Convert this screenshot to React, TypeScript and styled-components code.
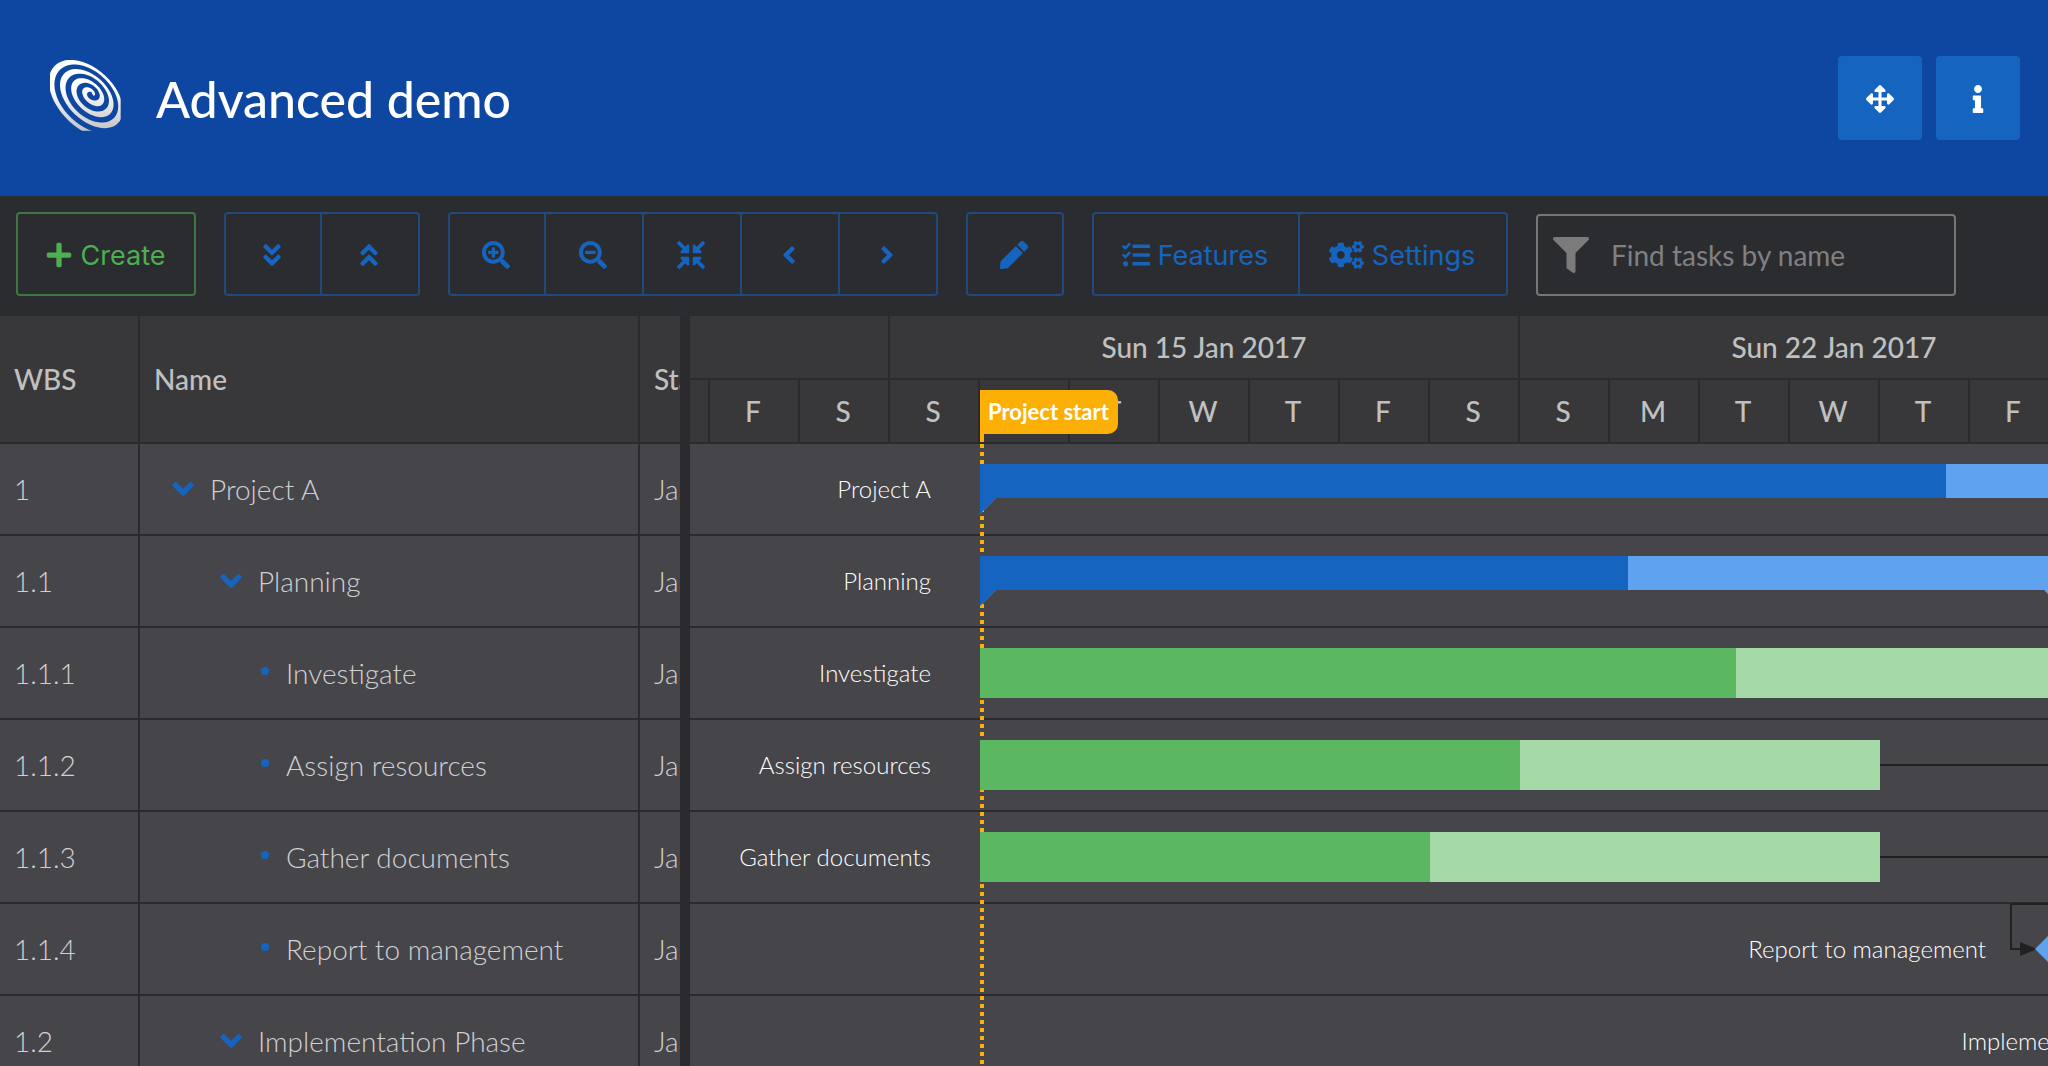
import React from "react";
import styled, { createGlobalStyle, css } from "styled-components";
import {
  FaAngleDoubleDown,
  FaAngleDoubleUp,
  FaAngleDown,
  FaAngleLeft,
  FaAngleRight,
  FaArrowsAlt,
  FaCogs,
  FaCompressArrowsAlt,
  FaFilter,
  FaInfo,
  FaPen,
  FaPlus,
  FaSearchMinus,
  FaSearchPlus,
  FaTasks,
} from "react-icons/fa";

const color = {
  header: "#0d47a1",
  primary: "#1565c0",
  primaryBorder: "#204a7c",
  green: "#4caf50",
  greenBorder: "#3e7742",
  toolbar: "#2b2c30",
  gridHeader: "#38383a",
  row: "#46454a",
  line: "#2b2a2e",
  headerText: "#c0c0c1",
  rowText: "#d0d0d2",
  parentLight: "#5fa2f0",
  task: "#5cb860",
  taskLight: "#a4d9a7",
  marker: "#fcb005",
  dependency: "#212122",
};

const DAY = 90;
const ROW = 92;
/* distance from the left edge of the timeline to the project start */
const ORIGIN = 290;

const GlobalStyle = createGlobalStyle`
  * { box-sizing: border-box; }
  body {
    margin: 0;
    background: ${color.row};
    font-family: Lato, "Liberation Sans", sans-serif;
  }
  button, input { font: inherit; margin: 0; }
`;

const Page = styled.div`
  display: flex;
  flex-direction: column;
  height: 100vh;
  overflow: hidden;
`;

const Header = styled.header`
  display: flex;
  align-items: center;
  flex: none;
  height: 196px;
  padding: 0 28px 0 50px;
  background: ${color.header};
`;

const Logo = styled.svg`
  display: block;
  width: 72px;
  height: 72px;
  margin-bottom: 4px;
`;

const Title = styled.h1`
  flex: 1;
  margin: 0 0 0 34px;
  padding-top: 2px;
  color: #fff;
  font-size: 50px;
  line-height: 60px;
  font-weight: 500;
`;

const HeaderTools = styled.div`
  display: flex;
  gap: 14px;
`;

const HeaderButton = styled.button`
  display: grid;
  place-items: center;
  width: 84px;
  height: 84px;
  padding: 2px 0 0;
  border: 0;
  border-radius: 4px;
  background: ${color.primary};
  color: #fff;
  font-size: 28px;
`;

const Toolbar = styled.div`
  display: flex;
  align-items: flex-end;
  flex: none;
  gap: 28px;
  padding: 16px 16px 20px;
  background: ${color.toolbar};
`;

const ButtonGroup = styled.div`
  display: flex;
`;

const ToolButton = styled.button<{ $width?: number; $tone?: "green" }>`
  display: flex;
  align-items: center;
  justify-content: center;
  gap: 8px;
  width: ${(p) => p.$width ?? 98}px;
  height: 84px;
  padding: 2px 2px 0 0;
  border: 2px solid ${(p) => (p.$tone ? color.greenBorder : color.primaryBorder)};
  background: transparent;
  color: ${(p) => (p.$tone ? color.green : color.primary)};
  font-family: Inter, "Liberation Sans", sans-serif;
  font-size: 27px;

  svg { flex: none; font-size: 28px; }
  &:not(:first-child) { border-left: 0; }
  &:first-child { border-top-left-radius: 4px; border-bottom-left-radius: 4px; }
  &:last-child { border-top-right-radius: 4px; border-bottom-right-radius: 4px; }
`;

/* the triple gear is drawn on a wider canvas than the other icons */
const SettingsIcon = styled(FaCogs)`
  width: 35px;
  height: 28px;
`;

const SearchField = styled.label`
  display: flex;
  align-items: center;
  width: 420px;
  height: 82px;
  padding: 0 15px;
  gap: 22px;
  border: 2px solid #777776;
  border-radius: 4px;
  color: #7b7b7b;

  svg { flex: none; font-size: 36px; }
`;

const SearchInput = styled.input`
  flex: 1;
  min-width: 0;
  padding: 0;
  border: 0;
  outline: 0;
  background: transparent;
  color: ${color.rowText};
  font-size: 28px;
  line-height: 34px;

  &::placeholder { color: #808082; opacity: 1; }
`;

const Gantt = styled.main`
  display: flex;
  flex: 1;
  min-height: 0;
  overflow: hidden;
`;

const GridPane = styled.section`
  flex: none;
  width: 680px;
  overflow: hidden;
  background: ${color.row};
`;

const Splitter = styled.div`
  flex: none;
  width: 10px;
  background: ${color.line};
`;

const Table = styled.table`
  width: 860px;
  table-layout: fixed;
  border-spacing: 0;
  font-size: 28px;
  line-height: 34px;
`;

const cell = css`
  padding: 0 14px;
  border-right: 2px solid ${color.line};
  border-bottom: 2px solid ${color.line};
  text-align: left;
  white-space: nowrap;
`;

const HeadCell = styled.th<{ $width: number }>`
  ${cell}
  width: ${(p) => p.$width}px;
  height: 128px;
  background: ${color.gridHeader};
  color: ${color.headerText};
  font-weight: 500;
`;

const Cell = styled.td`
  ${cell}
  height: ${ROW}px;
  color: ${color.rowText};
  font-weight: 300;
`;

const TreeCell = styled.div<{ $level: number }>`
  display: flex;
  align-items: center;
  padding-left: ${(p) => 12 + p.$level * 48}px;
`;

const Expander = styled.button`
  display: grid;
  place-items: center;
  width: 22px;
  height: 34px;
  margin-right: 22px;
  padding: 0;
  border: 0;
  background: transparent;
  color: ${color.primary};
  font-size: 34px;

  svg { flex: none; }
`;

const Bullet = styled.span`
  width: 8px;
  height: 8px;
  margin: 0 17px 4px -1px;
  border-radius: 50%;
  background: ${color.primary};
`;

const TimelinePane = styled.section`
  flex: 1;
  min-width: 0;
  position: relative;
  overflow: hidden;
  background: ${color.row};
`;

const TimeAxis = styled.div`
  display: flex;
  height: 128px;
  border-bottom: 2px solid ${color.line};
  background: ${color.gridHeader};
  color: ${color.headerText};
  font-size: 28px;
  line-height: 34px;
  font-weight: 500;
`;

const Week = styled.div<{ $width: number }>`
  flex: none;
  width: ${(p) => p.$width}px;
  overflow: hidden;
`;

const WeekTitle = styled.div`
  display: grid;
  place-items: center;
  height: 64px;
  border-right: 2px solid ${color.line};
  border-bottom: 2px solid ${color.line};
`;

const Days = styled.div`
  display: flex;
  justify-content: flex-end;
`;

const Day = styled.div`
  display: grid;
  place-items: center;
  flex: none;
  width: ${DAY}px;
  height: 62px;
  padding-right: 2px;
  border-right: 2px solid ${color.line};
`;

const TimelineRow = styled.div`
  position: relative;
  height: ${ROW}px;
  border-bottom: 2px solid ${color.line};
`;

const BarLabel = styled.span`
  position: absolute;
  right: 100%;
  top: 0;
  margin-right: 49px;
  color: #fff;
  font-size: 24px;
  line-height: 50px;
  font-weight: 300;
  white-space: nowrap;
`;

const Bar = styled.div`
  position: absolute;
  z-index: 2;
  top: 20px;
  height: 50px;
`;

const Fill = styled.div<{ $kind: "parent" | "task" }>`
  display: flex;
  height: 100%;
  background: ${(p) => (p.$kind === "parent" ? color.parentLight : color.taskLight)};
  ${(p) =>
    p.$kind === "parent" &&
    css`
      clip-path: polygon(0 0, 100% 0, 100% 100%, calc(100% - 16px) 34px, 16px 34px, 0 100%);
    `}
`;

const Progress = styled.div<{ $kind: "parent" | "task" }>`
  background: ${(p) => (p.$kind === "parent" ? color.primary : color.task)};
`;

const Milestone = styled.div`
  width: 100%;
  height: 100%;
  background: ${color.parentLight};
  clip-path: polygon(50% 0, 100% 50%, 50% 100%, 0 50%);
`;

const Marker = styled.div`
  position: absolute;
  left: ${ORIGIN}px;
  top: 74px;
  z-index: 1;
`;

const MarkerFlag = styled.div`
  padding: 0 9px 0 8px;
  border-radius: 0 10px 10px 0;
  background: ${color.marker};
  color: #fff;
  font-size: 22px;
  line-height: 44px;
  font-weight: 700;
  white-space: nowrap;
`;

const MarkerPole = styled.div`
  width: 4px;
  height: 8px;
  background: ${color.marker};
`;

const MarkerLine = styled.div`
  position: absolute;
  left: ${ORIGIN}px;
  top: 128px;
  bottom: 0;
  z-index: 1;
  width: 4px;
  background: repeating-linear-gradient(${color.marker} 0 4px, transparent 4px 8px);
`;

const Dependencies = styled.svg`
  position: absolute;
  left: 0;
  top: 128px;
  width: 100%;
  height: 100%;
  pointer-events: none;
`;

type Task = {
  wbs: string;
  name: string;
  level: number;
  kind: "parent" | "task" | "milestone";
  start: number;
  days: number;
  done: number;
};

const tasks: Task[] = [
  { wbs: "1", name: "Project A", level: 0, kind: "parent", start: 0, days: 23, done: 966 / (23 * DAY) },
  { wbs: "1.1", name: "Planning", level: 1, kind: "parent", start: 0, days: 12, done: 0.6 },
  { wbs: "1.1.1", name: "Investigate", level: 2, kind: "task", start: 0, days: 12, done: 0.7 },
  { wbs: "1.1.2", name: "Assign resources", level: 2, kind: "task", start: 0, days: 10, done: 0.6 },
  { wbs: "1.1.3", name: "Gather documents", level: 2, kind: "task", start: 0, days: 10, done: 0.5 },
  { wbs: "1.1.4", name: "Report to management", level: 2, kind: "milestone", start: 12, days: 0, done: 0 },
  { wbs: "1.2", name: "Implementation Phase", level: 1, kind: "parent", start: 14, days: 11, done: 0.2 },
];

const weeks = [
  { title: "", width: 200, days: ["T", "F", "S"] },
  ...["Sun 15 Jan 2017", "Sun 22 Jan 2017", "Sun 29 Jan 2017"].map((title) => ({
    title,
    width: 7 * DAY,
    days: ["S", "M", "T", "W", "T", "F", "S"],
  })),
];

/* A tilted spiral band; each turn drifts a little towards the lower left. */
function spiralPath() {
  const point = (level: number, turn: number) => {
    const a = 2 * Math.PI * turn;
    const across = level * (3.9 + 22.9 * Math.cos(a));
    const along = level * 36.7 * Math.sin(a);
    return `${(125 - 0.69 * across + 0.72 * along).toFixed(1)} ${(100 + 0.72 * across + 0.69 * along).toFixed(1)}`;
  };
  const outer: string[] = [];
  const inner: string[] = [];
  for (let t = 0.25; t <= 4.2; t += 0.02) {
    outer.push(point(t, t));
    inner.push(point(Math.max(t - 0.54 + 0.12 * Math.cos(2 * Math.PI * t) ** 2, 0), t));
  }
  return `M${outer.join("L")}L${inner.reverse().join("L")}Z`;
}

function SpiralLogo() {
  return (
    <Logo viewBox="0 0 216 216" aria-hidden="true">
      <defs>
        <linearGradient id="silver" x1="0" y1="0" x2="0" y2="1">
          <stop offset="0.35" stopColor="#fff" />
          <stop offset="0.9" stopColor="#c4c4c4" />
        </linearGradient>
        <clipPath id="frame">
          <rect x="0" y="0" width="212" height="212" />
        </clipPath>
      </defs>
      <path d={spiralPath()} fill="url(#silver)" clipPath="url(#frame)" />
    </Logo>
  );
}

function TaskBar({ task }: { task: Task }) {
  const milestone = task.kind === "milestone";
  const left = ORIGIN + task.start * DAY - (milestone ? 25 : 0);
  const width = milestone ? 50 : task.days * DAY;
  return (
    <Bar style={{ left, width }}>
      <BarLabel>{task.name}</BarLabel>
      {task.kind === "milestone" ? (
        <Milestone />
      ) : (
        <Fill $kind={task.kind}>
          <Progress $kind={task.kind} style={{ width: task.done * width }} />
        </Fill>
      )}
    </Bar>
  );
}

export default function App() {
  return (
    <Page>
      <GlobalStyle />
      <Header>
        <SpiralLogo />
        <Title>Advanced demo</Title>
        <HeaderTools>
          <HeaderButton aria-label="Full screen"><FaArrowsAlt /></HeaderButton>
          <HeaderButton aria-label="Information"><FaInfo /></HeaderButton>
        </HeaderTools>
      </Header>

      <Toolbar>
        <ButtonGroup>
          <ToolButton $width={180} $tone="green"><FaPlus />Create</ToolButton>
        </ButtonGroup>
        <ButtonGroup>
          <ToolButton aria-label="Expand all"><FaAngleDoubleDown /></ToolButton>
          <ToolButton aria-label="Collapse all"><FaAngleDoubleUp /></ToolButton>
        </ButtonGroup>
        <ButtonGroup>
          <ToolButton aria-label="Zoom in"><FaSearchPlus /></ToolButton>
          <ToolButton aria-label="Zoom out"><FaSearchMinus /></ToolButton>
          <ToolButton aria-label="Zoom to fit"><FaCompressArrowsAlt /></ToolButton>
          <ToolButton aria-label="Previous time span"><FaAngleLeft /></ToolButton>
          <ToolButton aria-label="Next time span"><FaAngleRight /></ToolButton>
        </ButtonGroup>
        <ButtonGroup>
          <ToolButton aria-label="Edit task"><FaPen /></ToolButton>
        </ButtonGroup>
        <ButtonGroup>
          <ToolButton $width={208}><FaTasks />Features</ToolButton>
          <ToolButton $width={208}><SettingsIcon />Settings</ToolButton>
        </ButtonGroup>
        <SearchField>
          <FaFilter />
          <SearchInput type="text" placeholder="Find tasks by name" aria-label="Find tasks by name" />
        </SearchField>
      </Toolbar>

      <Gantt>
        <GridPane>
          <Table>
            <thead>
              <tr>
                <HeadCell $width={140}>WBS</HeadCell>
                <HeadCell $width={500}>Name</HeadCell>
                <HeadCell $width={220}>Start</HeadCell>
              </tr>
            </thead>
            <tbody>
              {tasks.map((task) => (
                <tr key={task.wbs}>
                  <Cell>{task.wbs}</Cell>
                  <Cell>
                    <TreeCell $level={task.level}>
                      {task.kind === "parent" ? (
                        <Expander aria-label={`Collapse ${task.name}`}><FaAngleDown /></Expander>
                      ) : (
                        <Bullet />
                      )}
                      {task.name}
                    </TreeCell>
                  </Cell>
                  <Cell>Jan 16, 2017</Cell>
                </tr>
              ))}
            </tbody>
          </Table>
        </GridPane>
        <Splitter />
        <TimelinePane>
          <TimeAxis>
            {weeks.map((week, i) => (
              <Week key={i} $width={week.width}>
                <WeekTitle>{week.title}</WeekTitle>
                <Days>
                  {week.days.map((day, d) => (
                    <Day key={d}>{day}</Day>
                  ))}
                </Days>
              </Week>
            ))}
          </TimeAxis>
          <Marker>
            <MarkerFlag>Project start</MarkerFlag>
            <MarkerPole />
          </Marker>
          {tasks.map((task) => (
            <TimelineRow key={task.wbs}>
              <TaskBar task={task} />
            </TimelineRow>
          ))}
          <MarkerLine />
          <Dependencies fill="none" stroke={color.dependency} strokeWidth="2">
            <path d="M1190 321H1400" />
            <path d="M1190 413H1400" />
            <path d="M1400 460H1321V505H1332" />
            <path d="M1330 498L1347 505L1330 512Z" fill={color.dependency} stroke="none" />
          </Dependencies>
        </TimelinePane>
      </Gantt>
    </Page>
  );
}
